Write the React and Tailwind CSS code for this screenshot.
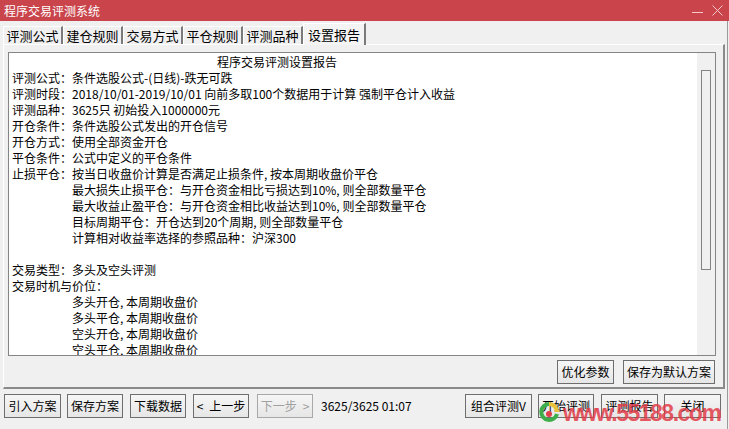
import React from 'react';

const tabs = ['评测公式', '建仓规则', '交易方式', '平仓规则', '评测品种', '设置报告'];

const lines = [
  { t: '程序交易评测设置报告', title: true },
  { t: '评测公式：条件选股公式-(日线)-跌无可跌' },
  { t: '评测时段：2018/10/01-2019/10/01 向前多取100个数据用于计算 强制平仓计入收益' },
  { t: '评测品种：3625只 初始投入1000000元' },
  { t: '开仓条件：条件选股公式发出的开仓信号' },
  { t: '开仓方式：使用全部资金开仓' },
  { t: '平仓条件：公式中定义的平仓条件' },
  { t: '止损平仓：按当日收盘价计算是否满足止损条件, 按本周期收盘价平仓' },
  { t: '最大损失止损平仓：与开仓资金相比亏损达到10%, 则全部数量平仓', indent: true },
  { t: '最大收益止盈平仓：与开仓资金相比收益达到10%, 则全部数量平仓', indent: true },
  { t: '目标周期平仓：开仓达到20个周期, 则全部数量平仓', indent: true },
  { t: '计算相对收益率选择的参照品种：沪深300', indent: true },
  { t: '' },
  { t: '交易类型：多头及空头评测' },
  { t: '交易时机与价位：' },
  { t: '多头开仓, 本周期收盘价', indent: true },
  { t: '多头平仓, 本周期收盘价', indent: true },
  { t: '空头开仓, 本周期收盘价', indent: true },
  { t: '空头平仓, 本周期收盘价', indent: true },
];

function Btn({ children, className = '', disabled }) {
  return (
    <div
      className={`h-[24px] flex items-center justify-center border border-[#6e6e6e] bg-gradient-to-b from-[#f6f6f6] to-[#e6e6e6] text-[12px] ${
        disabled ? 'text-[#a0a0a0] border-[#a8a8a8]' : 'text-black'
      } ${className}`}
    >
      {children}
    </div>
  );
}

export default function App() {
  return (
    <div
      className="relative w-[729px] h-[429px] overflow-hidden bg-[#f0f0f0] flex flex-col"
      style={{ fontFamily: '"Noto Sans CJK SC", "Noto Sans", sans-serif' }}
    >
      {/* title bar */}
      <div className="h-[21px] bg-[#c9444b] flex items-center justify-between pl-[4px] pr-[6px] shrink-0">
        <span className="text-white text-[12px] leading-none">程序交易评测系统</span>
        <div className="flex items-center gap-[9px]">
          <svg width="11" height="11" viewBox="0 0 11 11">
            <line x1="0" y1="7.5" x2="11" y2="7.5" stroke="#f3c9cb" strokeWidth="1" />
          </svg>
          <svg width="11" height="11" viewBox="0 0 11 11">
            <path d="M0.5 0.5 L10.5 10.5 M10.5 0.5 L0.5 10.5" stroke="#f3c9cb" strokeWidth="1" />
          </svg>
        </div>
      </div>

      {/* tabs */}
      <div className="h-[23px] flex items-end pl-[3px] shrink-0">
        {tabs.map((t, i) => {
          const active = i === tabs.length - 1;
          return (
            <div
              key={t}
              className={`flex items-center justify-center border-t border-l border-white border-r-2 border-r-[#7a7a7a] text-[13px] text-black ${
                active ? 'h-[22px] w-[63px] bg-[#f4f4f4] -mb-px relative z-10' : 'h-[18px] w-[60px] bg-[#f0f0f0]'
              }`}
            >
              {t}
            </div>
          );
        })}
      </div>

      {/* panel */}
      <div className="ml-[3px] mr-[4px] h-[345px] border-t border-l border-white border-r-2 border-b-2 border-r-[#8a8a8a] border-b-[#8a8a8a] flex flex-col shrink-0">
        <div className="mt-[7px] ml-[4px] w-[708px] h-[304px] border border-[#858585] bg-white flex">
          <div className="flex-1 pl-[3px] pt-[1px] overflow-hidden text-[12px] leading-[16px] text-black whitespace-nowrap">
            {lines.map((l, i) => (
              <div
                key={i}
                className={`h-[16px] ${l.title ? 'pl-[205px]' : l.indent ? 'pl-[60px]' : ''}`}
              >
                {l.t}
              </div>
            ))}
          </div>
          <div className="w-[18px] bg-[#f0f0f0] pt-[17px] flex justify-center">
            <div className="w-[10px] h-[200px] border border-[#838383] bg-[#f0f0f0]" />
          </div>
        </div>
        <div className="flex justify-end gap-[9px] mt-[4px] pr-[8px]">
          <Btn className="w-[57px]">优化参数</Btn>
          <Btn className="w-[92px]">保存为默认方案</Btn>
        </div>
      </div>

      {/* bottom row */}
      <div className="flex items-center mt-[5px] pl-[4px]">
        <Btn className="w-[57px]">引入方案</Btn>
        <Btn className="w-[56px] ml-[6px]">保存方案</Btn>
        <Btn className="w-[56px] ml-[7px]">下载数据</Btn>
        <Btn className="w-[56px] ml-[7px] gap-[6px]">
          <span>&lt;</span>
          <span>上一步</span>
        </Btn>
        <Btn className="w-[56px] ml-[8px] gap-[6px]" disabled>
          <span>下一步</span>
          <span>&gt;</span>
        </Btn>
        <span className="ml-[8px] text-[12px] text-black">3625/3625 01:07</span>
        <Btn className="w-[67px] ml-auto">组合评测V</Btn>
        <Btn className="w-[56px] ml-[6px]">开始评测</Btn>
        <Btn className="w-[57px] ml-[7px]">评测报告</Btn>
        <Btn className="w-[57px] ml-[6px] mr-[8px]">关闭</Btn>
      </div>

      {/* window right border */}
      <div className="absolute top-[21px] right-[1px] w-px h-[408px] bg-[#9a9a9a]" />

      {/* watermark */}
      <div className="absolute left-[539px] top-[400px] flex items-center pointer-events-none">
        <svg width="20" height="26" viewBox="0 0 20 26">
          <path d="M10 4 A8 8 0 1 0 18 14" stroke="#3fae4a" strokeWidth="4" fill="none" />
          <path d="M10 4 A8 8 0 0 1 18 12" stroke="#e8c33a" strokeWidth="4" fill="none" />
          <circle cx="10" cy="14" r="3" fill="#e0404a" />
        </svg>
        <span
          className="ml-[4px] text-[23px] font-black tracking-[-1.5px] text-[#e23c48]/85 leading-none"
          style={{ fontFamily: '"Liberation Sans", Arial, sans-serif' }}
        >
          www.55188.com
        </span>
      </div>
    </div>
  );
}
